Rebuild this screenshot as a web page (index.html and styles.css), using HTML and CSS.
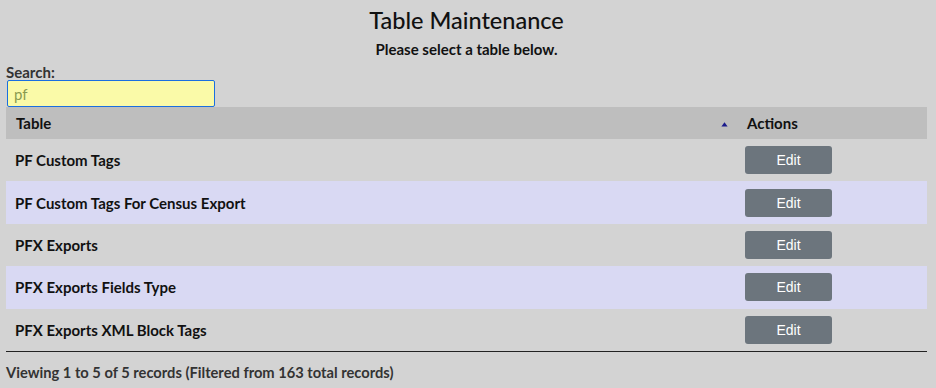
FILE: index.html
```html
<!DOCTYPE html>
<html>
<head>
<meta charset="utf-8">
<link rel="stylesheet" href="styles.css">
</head>
<body>
<div class="page">
  <h1 class="title">Table Maintenance</h1>
  <p class="subtitle">Please select a table below.</p>
  <div class="search">
    <label class="search-label" for="q">Search:</label>
    <input id="q" class="search-input" type="text" value="pf">
  </div>
  <table class="grid">
    <thead>
      <tr>
        <th class="col-table">Table<svg class="sort" width="7" height="5" viewBox="0 0 7 5"><path d="M3.5 0.3 L6.6 4.6 L0.4 4.6 Z" fill="#1a1a8c"/></svg></th>
        <th class="col-actions">Actions</th>
      </tr>
    </thead>
    <tbody>
      <tr><td>PF Custom Tags</td><td class="act"><button class="btn">Edit</button></td></tr>
      <tr class="alt"><td>PF Custom Tags For Census Export</td><td class="act"><button class="btn">Edit</button></td></tr>
      <tr><td>PFX Exports</td><td class="act"><button class="btn">Edit</button></td></tr>
      <tr class="alt"><td>PFX Exports Fields Type</td><td class="act"><button class="btn">Edit</button></td></tr>
      <tr><td>PFX Exports XML Block Tags</td><td class="act"><button class="btn">Edit</button></td></tr>
    </tbody>
  </table>
  <div class="info">Viewing 1 to 5 of 5 records (Filtered from 163 total records)</div>
</div>
</body>
</html>
```

FILE: styles.css
```css
html, body {
  margin: 0;
  padding: 0;
  background: #d3d3d3;
}
body {
  font-family: Lato, "Open Sans", sans-serif;
  color: #111;
}
.page {
  padding: 0 9px 0 6px;
}
.title {
  margin: 0;
  padding-top: 7px;
  text-align: center;
  font-size: 23.5px;
  font-weight: 500;
  line-height: 26px;
  color: #111;
}
.subtitle {
  margin: 0;
  padding-top: 8px;
  text-align: center;
  font-size: 15px;
  font-weight: 700;
  line-height: 16px;
  color: #111;
}
.search {
  display: flex;
  flex-direction: column;
  align-items: flex-start;
  padding-top: 8px;
}
.search-label {
  font-size: 15px;
  font-weight: 700;
  line-height: 14px;
  color: #333;
}
.search-input {
  box-sizing: border-box;
  margin: 1px 0 0 1px;
  width: 208px;
  height: 27px;
  border: 1px solid #1a6fe0;
  border-radius: 2px;
  background: #fafaa8;
  padding: 0 6px;
  font-family: Lato, sans-serif;
  font-size: 15px;
  color: #8a9a50;
  outline: none;
}
.grid {
  width: 100%;
  border-collapse: collapse;
  border-bottom: 1px solid #222;
}
.grid th {
  background: #bebebe;
  height: 32px;
  padding: 0 10px;
  text-align: left;
  font-size: 15px;
  font-weight: 700;
  color: #111;
}
.col-table {
  position: relative;
}
.sort {
  position: absolute;
  right: 9px;
  top: 15px;
}
.col-actions {
  width: 170px;
}
.grid td {
  height: 42.4px;
  padding: 0 9px;
  font-size: 15px;
  font-weight: 700;
  color: #111;
}
.grid td.act {
  padding: 0 8px;
}
.grid tr.alt td {
  background: #d9d9f3;
}
.btn {
  display: block;
  width: 87px;
  height: 28px;
  border: 0;
  border-radius: 3px;
  background: #6c757d;
  color: #fff;
  font-family: "Liberation Sans", Arial, sans-serif;
  font-size: 14px;
  padding: 0;
}
.info {
  padding-top: 11px;
  font-size: 14.7px;
  font-weight: 700;
  color: #333;
}
```
